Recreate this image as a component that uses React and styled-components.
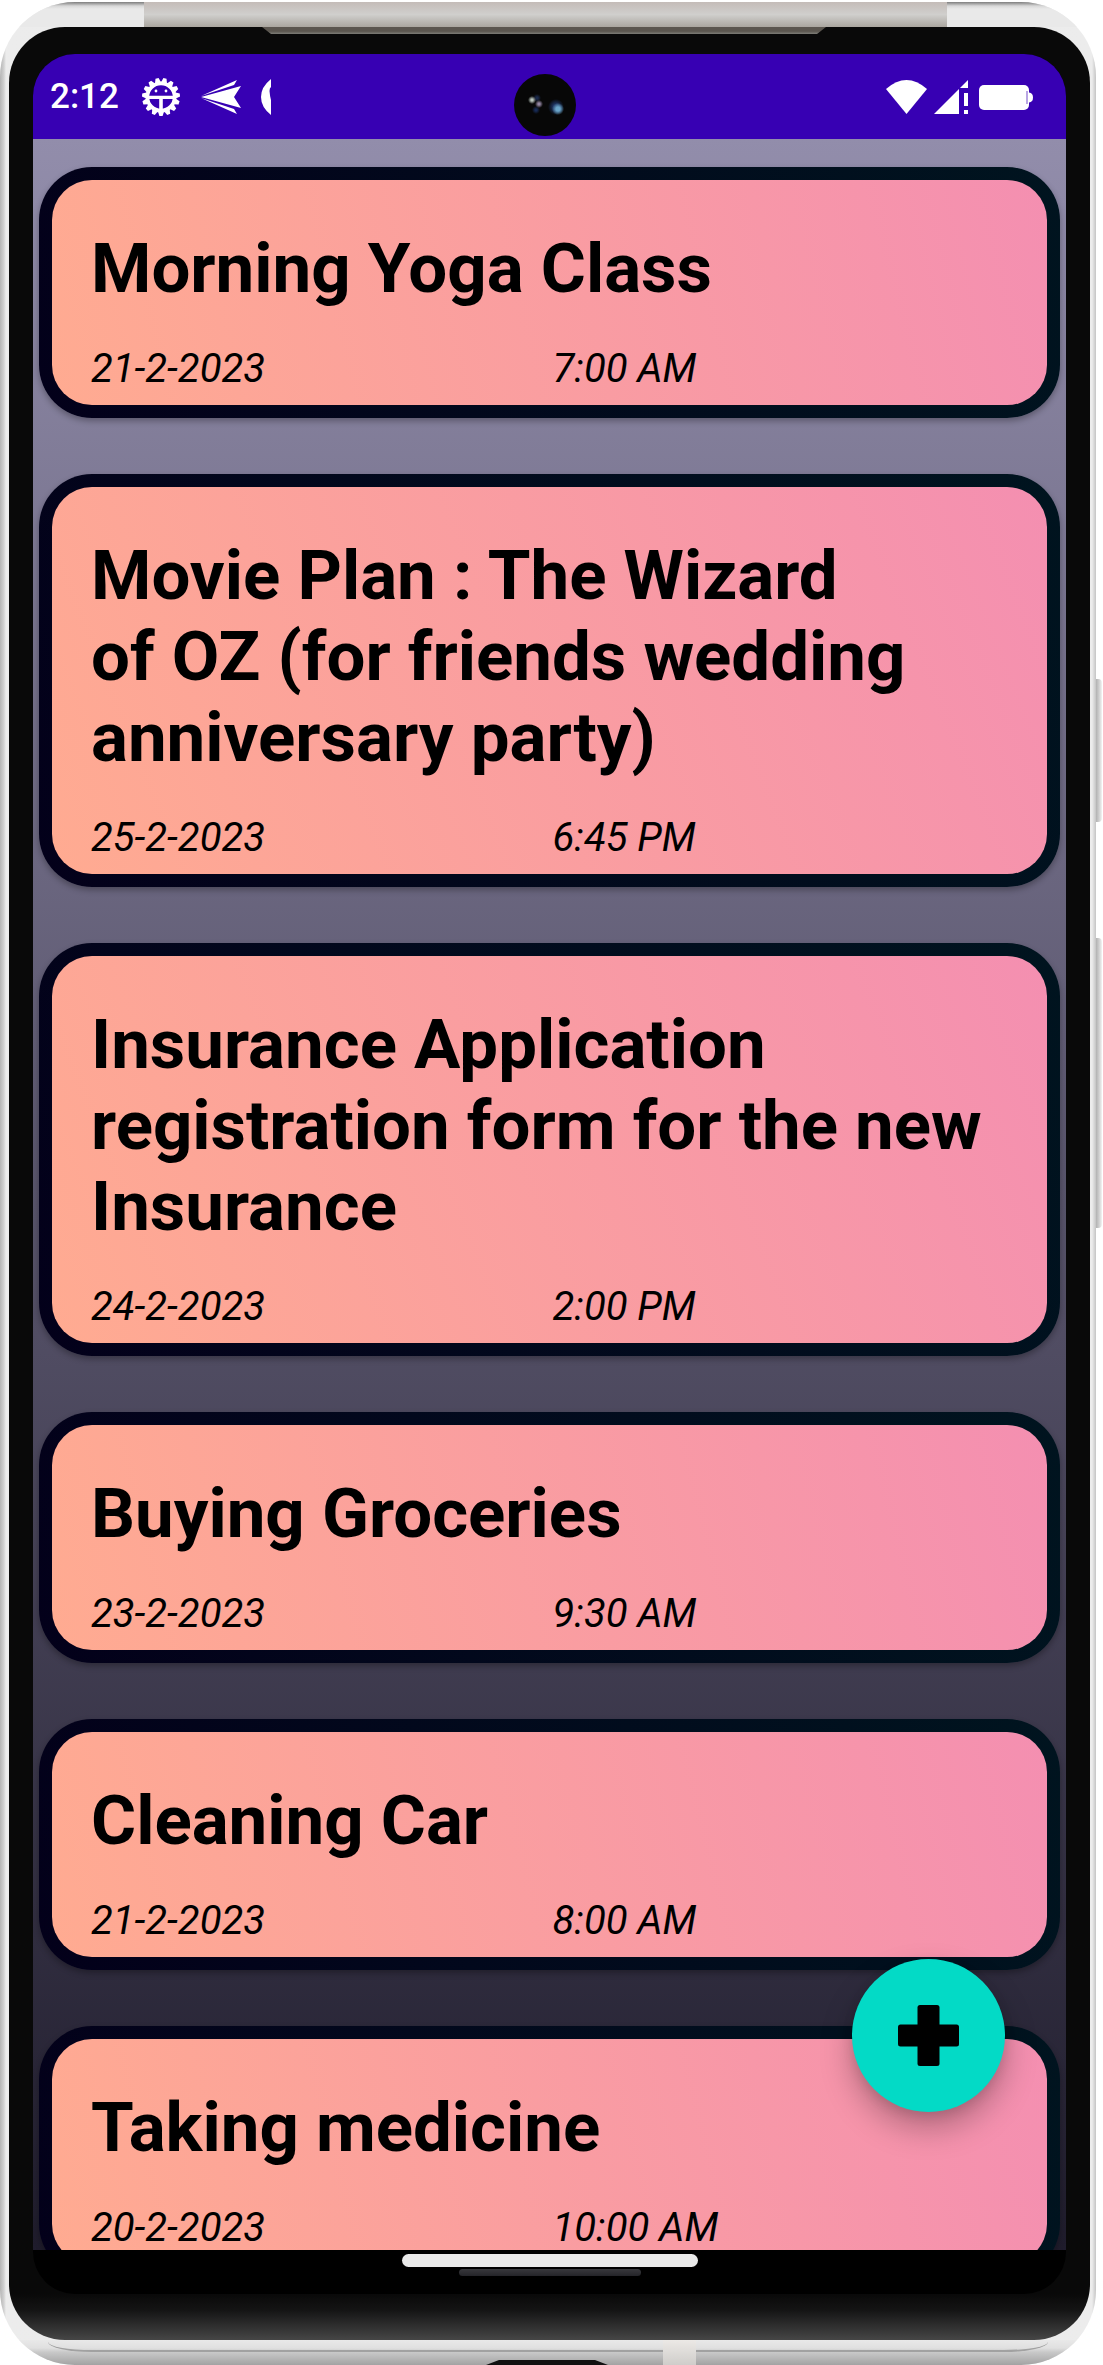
import React from "react";
import styled, { createGlobalStyle } from "styled-components";

const GlobalStyle = createGlobalStyle`
  *, *::before, *::after { box-sizing: border-box; }
  body { margin: 0; background: #fff; font-family: Roboto, "Liberation Sans", sans-serif; }
`;

const Page = styled.div`
  display: flex;
  height: 100vh;
  padding-top: 2px;
  overflow: hidden;
`;

const Frame = styled.div`
  position: relative;
  flex: 1;
  min-width: 0;
  display: flex;
  flex-direction: column;
  border-radius: 75px;
  overflow: hidden;
  background: linear-gradient(90deg, #b4b4b4 0, #d2d2d2 4px, #ececec 6px, #e9e9e9 50%, #ececec calc(100% - 4px), #c4c4c4 100%);
`;

const TopEdge = styled.div`
  flex: none;
  height: 25px;
  padding: 0 149px 0 144px;
  background: linear-gradient(#7d7d7d, #d8d8d8 4px, #e9e9e9 7px);
`;

const TopBand = styled.div`
  height: 100%;
  background: linear-gradient(#c4bcb8, #d0cfcd 50%, #aaa69f);
`;

const Bezel = styled.div`
  flex: 1;
  min-height: 0;
  display: flex;
  flex-direction: column;
  margin: 0 6px 0 9px;
  border-radius: 56px;
  overflow: hidden;
  background: linear-gradient(#090909 calc(100% - 46px), #141414 calc(100% - 30px), #464646);
`;

const Speaker = styled.div`
  flex: none;
  height: 7px;
  margin: 0 264px 20px 253px;
  background: linear-gradient(#5b564f 60%, #7d7d77);
  clip-path: polygon(0 0, 100% 0, calc(100% - 9px) 100%, 9px 100%);
`;

const Screen = styled.div`
  position: relative;
  flex: 1;
  min-height: 0;
  display: flex;
  flex-direction: column;
  margin: 0 24px 46px;
  border-radius: 42px;
  overflow: hidden;
  background: #000;
`;

const StatusBar = styled.header`
  flex: none;
  display: flex;
  align-items: center;
  justify-content: space-between;
  height: 85px;
  padding: 0 33px 0 17px;
  background: #3700b3;
  color: #fff;
`;

const StatusGroup = styled.div`
  display: flex;
  align-items: center;
  gap: ${(p) => p.$gap}px;
`;

const Clock = styled.span`
  margin-right: 2px;
  font-size: 35px;
  line-height: 42px;
  font-weight: 500;
`;

const Camera = styled.div`
  position: absolute;
  top: 20px;
  left: calc(50% - 36px);
  width: 62px;
  height: 62px;
  border-radius: 50%;
  background:
    radial-gradient(circle at 18px 26px, #b9c4bd 1px, transparent 4px),
    radial-gradient(circle at 25px 30px, #9285a2 1px, transparent 4px),
    radial-gradient(circle at 23px 24px, #1b2a4c 1px, transparent 4px),
    radial-gradient(circle at 22px 36px, #172a54 1px, transparent 4px),
    radial-gradient(circle at 44px 35px, #6aa5ca 2px, transparent 6px),
    radial-gradient(circle at 42px 33px, #1d3260 3px, transparent 8px),
    #070707;
`;

const List = styled.ul`
  flex: 1;
  min-height: 0;
  display: flex;
  flex-direction: column;
  gap: 56px;
  margin: 0;
  padding: 28px 6px 0;
  overflow: hidden;
  list-style: none;
  background: linear-gradient(#928dab, #1f1c2c);
`;

const Item = styled.li`
  flex: none;
  padding: 13px;
  border-radius: 53px;
  background: linear-gradient(${(p) => p.$angle}deg, #03001a, #00141f);
  box-shadow: 0 3px 6px rgba(0, 0, 0, 0.3);
`;

const Card = styled.article`
  padding: 48px 39px 15px;
  border-radius: 40px;
  background: linear-gradient(${(p) => p.$angle}deg, #ffab91, #f48fb1);
  color: #000;
`;

const Title = styled.h2`
  margin: 0 0 39px;
  font-size: 69px;
  line-height: 81px;
  font-weight: 700;
  white-space: pre-line;
`;

const Meta = styled.div`
  display: grid;
  grid-template-columns: 1fr 1fr;
  column-gap: 6px;
  font-size: 40px;
  line-height: 42px;
  font-style: italic;
`;

const AddButton = styled.button`
  position: absolute;
  right: 61px;
  bottom: 182px;
  width: 153px;
  height: 153px;
  display: grid;
  place-items: center;
  padding: 0;
  border: 0;
  border-radius: 50%;
  background: #03dac6;
  color: #000;
  box-shadow: 0 16px 32px rgba(0, 0, 0, 0.28), 0 4px 12px rgba(0, 0, 0, 0.1);
`;

const NavBar = styled.footer`
  flex: none;
  display: flex;
  flex-direction: column;
  align-items: center;
  gap: 2px;
  height: 44px;
  padding-top: 4px;
`;

const HomeHandle = styled.div`
  width: 296px;
  height: 13px;
  border-radius: 7px;
  background: #eaeaea;
`;

const Microphone = styled.div`
  width: 182px;
  height: 7px;
  border-radius: 4px;
  background: linear-gradient(#38383c, #25252a);
`;

const BottomEdge = styled.div`
  flex: none;
  position: relative;
  height: 25px;
  background: linear-gradient(#e9e9e9, #e0e0e0 8px, #c9c9c9 12px, #a3a3a3);
`;

const Groove = styled.div`
  position: absolute;
  top: 0;
  left: 48px;
  right: 48px;
  height: 12px;
  border-bottom: 2px solid #a1a1a1;
  border-radius: 0 0 44px 44px / 0 0 10px 10px;
`;

const Antenna = styled.div`
  position: absolute;
  top: 0;
  bottom: 0;
  left: calc(50% + 115px);
  width: 33px;
  background: linear-gradient(#ece9e6, #cfcdca);
`;

const Port = styled.div`
  position: absolute;
  bottom: 0;
  left: calc(50% - 62px);
  width: 122px;
  height: 5px;
  background: #111;
  clip-path: polygon(13px 0, calc(100% - 13px) 0, 100% 100%, 0 100%);
`;

const SideRail = styled.div`
  flex: none;
  display: flex;
  flex-direction: column;
  gap: 116px;
  width: 7px;
  padding-top: 677px;
`;

const SideKey = styled.div`
  width: 6px;
  height: ${(p) => p.$length}px;
  border-radius: 0 4px 4px 0;
  background: linear-gradient(90deg, #b2b2b2, #cecece 50%, #f4f4f4);
`;

const TEETH = Array.from({ length: 15 }, (_, i) => i * 24);

function GearIcon() {
  return (
    <svg width="40" height="40" viewBox="-20 -20 40 40" aria-hidden="true">
      {TEETH.map((a) => (
        <path key={a} transform={`rotate(${a + 12})`} d="M-3.2 -14 L-1.600 -19 H1.600 L3.200 -14 Z" fill="#fff" />
      ))}
      <circle r="13.6" fill="none" stroke="#fff" strokeWidth="3.6" />
      <path d="M-13 -1.2 H13 V2 H1.800 V14 H-1.800 V2 H-13 Z" fill="#fff" />
      <circle cx="-5" cy="-6" r="1.4" fill="#fff" />
      <circle cx="5" cy="-6" r="1.4" fill="#fff" />
    </svg>
  );
}

function PlaneIcon() {
  return (
    <svg width="40" height="36" viewBox="0 0 40 36" fill="#fff" aria-hidden="true">
      <path d="M0 18 L40 7 L33 18 L40 29 Z" />
      <path d="M0 17 L36 1 L33 6 Z" />
      <path d="M0 19 L36 35 L33 30 Z" />
    </svg>
  );
}

function CrescentIcon() {
  return (
    <svg width="10" height="36" viewBox="0 0 10 36" fill="#fff" aria-hidden="true">
      <path d="M10 0 V8 Q8.500 9 8.500 12 Q9 18 10 21 V36 Q0 28 0 18 Q0 8 10 0 Z" />
    </svg>
  );
}

function WifiIcon() {
  return (
    <svg width="41" height="34" viewBox="0 0 41 34" fill="#fff" aria-hidden="true">
      <path d="M0 9 Q20.500 -9 41 9 L20.500 34 Z" />
    </svg>
  );
}

function SignalIcon() {
  return (
    <svg width="38" height="34" viewBox="0 0 38 34" fill="#fff" aria-hidden="true">
      <path d="M0 34 L25 9 V34 Z" />
      <path d="M26 8 L34 0 V8 Z" />
      <path d="M30 13 H34 V26 H30 Z M30 30 H34 V34 H30 Z" />
    </svg>
  );
}

function BatteryIcon() {
  return (
    <svg width="54" height="34" viewBox="0 0 54 34" aria-hidden="true">
      <rect x="0" y="5" width="50" height="25" rx="5" fill="#fff" />
      <path d="M50 12.500 Q54 13 54 17.500 Q54 22 50 22.500 Z" fill="#fff" />
      <path d="M48 11 V24" stroke="#3700b3" strokeWidth="0.7" />
    </svg>
  );
}

function PlusIcon() {
  return (
    <svg width="61" height="61" viewBox="0 0 61 61" fill="currentColor" aria-hidden="true">
      <rect x="19.5" y="0" width="22" height="61" rx="2.500" />
      <rect x="0" y="19.5" width="61" height="22" rx="2.500" />
    </svg>
  );
}

const reminders = [
  { title: "Morning Yoga Class", date: "21-2-2023", time: "7:00 AM", angle: 76 },
  { title: "Movie Plan : The Wizard\nof OZ (for friends wedding anniversary party)", date: "25-2-2023", time: "6:45 PM", angle: 68 },
  { title: "Insurance Application registration form for the new Insurance", date: "24-2-2023", time: "2:00 PM", angle: 68 },
  { title: "Buying Groceries", date: "23-2-2023", time: "9:30 AM", angle: 76 },
  { title: "Cleaning Car", date: "21-2-2023", time: "8:00 AM", angle: 76 },
  { title: "Taking medicine", date: "20-2-2023", time: "10:00 AM", angle: 76 },
];

export default function App() {
  return (
    <>
      <GlobalStyle />
      <Page>
        <Frame>
          <TopEdge>
            <TopBand />
          </TopEdge>
          <Bezel>
            <Speaker />
            <Screen>
              <StatusBar>
                <StatusGroup $gap={20}>
                  <Clock>2:12</Clock>
                  <GearIcon />
                  <PlaneIcon />
                  <CrescentIcon />
                </StatusGroup>
                <StatusGroup $gap={7}>
                  <WifiIcon />
                  <SignalIcon />
                  <BatteryIcon />
                </StatusGroup>
              </StatusBar>
              <List>
                {reminders.map((r) => (
                  <Item key={r.title} $angle={r.angle}>
                    <Card $angle={r.angle}>
                      <Title>{r.title}</Title>
                      <Meta>
                        <time>{r.date}</time>
                        <time>{r.time}</time>
                      </Meta>
                    </Card>
                  </Item>
                ))}
              </List>
              <NavBar>
                <HomeHandle />
                <Microphone />
              </NavBar>
              <Camera />
              <AddButton type="button" aria-label="Add reminder">
                <PlusIcon />
              </AddButton>
            </Screen>
          </Bezel>
          <BottomEdge>
            <Groove />
            <Antenna />
            <Port />
          </BottomEdge>
        </Frame>
        <SideRail>
          <SideKey $length={143} />
          <SideKey $length={290} />
        </SideRail>
      </Page>
    </>
  );
}
